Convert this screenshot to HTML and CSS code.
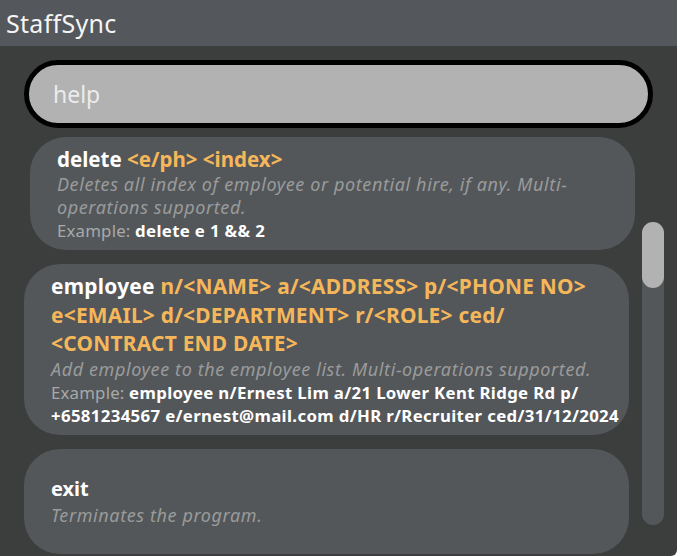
FILE: index.html
```html
<!DOCTYPE html>
<html>
<head>
<meta charset="utf-8">
<link rel="stylesheet" href="styles.css">
</head>
<body>
<div class="app">
  <header class="titlebar">StaffSync</header>
  <main class="content">
    <div class="command">help</div>
    <div class="results">
      <div class="list">
        <div class="card card-first">
          <div class="cmd">delete <span class="arg">&lt;e/ph&gt; &lt;index&gt;</span></div>
          <div class="desc">Deletes all index of employee or potential hire, if any. Multi-operations supported.</div>
          <div class="example">Example: <b>delete e 1 &amp;&amp; 2</b></div>
        </div>
        <div class="card">
          <div class="cmd">employee <span class="arg">n/&lt;NAME&gt; a/&lt;ADDRESS&gt; p/&lt;PHONE NO&gt; e&lt;EMAIL&gt; d/&lt;DEPARTMENT&gt; r/&lt;ROLE&gt; ced/ &lt;CONTRACT END DATE&gt;</span></div>
          <div class="desc">Add employee to the employee list. Multi-operations supported.</div>
          <div class="example">Example: <b>employee n/Ernest Lim a/21 Lower Kent Ridge Rd p/ +6581234567 e/ernest@mail.com d/HR r/Recruiter ced/31/12/2024</b></div>
        </div>
        <div class="card card-last">
          <div class="cmd">exit</div>
          <div class="desc">Terminates the program.</div>
        </div>
      </div>
      <div class="scrollbar"><div class="thumb"></div></div>
    </div>
  </main>
</div>
</body>
</html>
```
FILE: styles.css
```css
html, body {
  margin: 0;
  padding: 0;
  background: #ffffff;
}
body {
  font-family: "Noto Sans", "Open Sans", sans-serif;
  width: 680px;
  height: 556px;
  overflow: hidden;
}
.app {
  width: 677px;
  height: 556px;
  background: #3c3e3d;
  display: flex;
  flex-direction: column;
  border-bottom-right-radius: 6px;
  overflow: hidden;
}
.titlebar {
  height: 46px;
  flex: none;
  background: #54575b;
  color: #f4f4f4;
  font-size: 25px;
  letter-spacing: 0.3px;
  line-height: 46px;
  padding-left: 6px;
}
.content {
  flex: 1;
  display: flex;
  flex-direction: column;
}
.command {
  margin: 14px 24px 0 24px;
  height: 58px;
  border: 5px solid #000;
  border-radius: 34px;
  background: #b1b2b1;
  color: #ececec;
  font-size: 23px;
  line-height: 58px;
  padding-left: 24px;
}
.results {
  display: flex;
  margin-top: 9px;
}
.list {
  width: 642px;
  display: flex;
  flex-direction: column;
  gap: 14px;
}
.card {
  margin-left: 24px;
  width: 574px;
  min-height: 89px;
  padding: 8px 4px 8px 27px;
  background: #53575a;
  border-radius: 36px;
  display: flex;
  flex-direction: column;
  justify-content: center;
}
.card-first {
  margin-left: 30px;
}
.cmd {
  color: #ffffff;
  font-weight: 700;
  font-size: 20.9px;
  letter-spacing: 0.25px;
  line-height: 28.5px;
}
.arg {
  color: #f5b75a;
}
.card-first .cmd {
  font-size: 20.5px;
  letter-spacing: 0;
  line-height: 28px;
}
.card-last .cmd {
  font-size: 20px;
  letter-spacing: 0;
}
.desc {
  color: #9a9b9b;
  font-style: italic;
  font-size: 18px;
  letter-spacing: 0.6px;
  line-height: 23px;
}
.example {
  color: #a8a9a9;
  font-size: 16.8px;
  letter-spacing: 0.2px;
  line-height: 23px;
}
.example b {
  color: #ffffff;
  font-weight: 700;
  font-size: 16.8px;
  letter-spacing: 0.35px;
}
.scrollbar {
  width: 22px;
  height: 303px;
  margin-top: 85px;
  background: #53575a;
  border-radius: 11px;
  flex: none;
}
.thumb {
  height: 66px;
  background: #b1b2b1;
  border-radius: 11px;
}
```
